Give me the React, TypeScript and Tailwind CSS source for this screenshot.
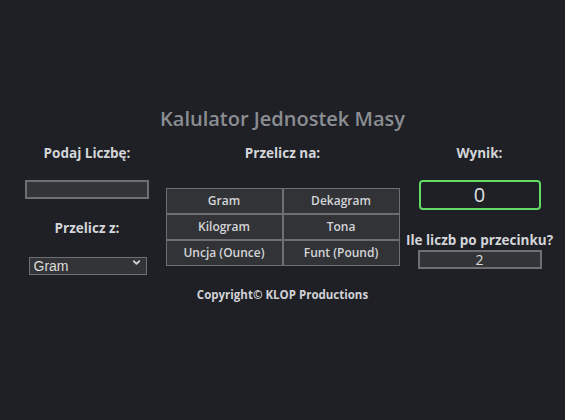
import React, { useState } from 'react';
import { ChevronDown } from 'lucide-react';

const units = ['Gram', 'Dekagram', 'Kilogram', 'Tona', 'Uncja (Ounce)', 'Funt (Pound)'];

export default function App() {
  const [value, setValue] = useState('');
  const [from, setFrom] = useState('Gram');
  const [decimals, setDecimals] = useState('2');

  return (
    <div className="min-h-[420px] w-full bg-[#1f2025] font-['Open_Sans',sans-serif] text-[#d3d5d8]">
      <div className="flex flex-col items-center pt-[106px]">
        <h1 className="text-[20px] font-semibold leading-[26px] text-[#8b8e93]">Kalulator Jednostek Masy</h1>

        <div className="mt-[12px] flex w-full">
          <div className="flex w-[174px] flex-col items-center">
            <p className="text-[13.5px] font-bold leading-[18px]">Podaj Liczbę:</p>
            <input
              value={value}
              onChange={(e) => setValue(e.target.value)}
              className="mt-[18px] h-[19px] w-[124px] border-2 border-[#6e6f72] bg-[#333438] px-1 text-[13px] text-[#ddd] outline-none"
            />
            <p className="mt-[20px] text-[13.5px] font-bold leading-[18px]">Przelicz z:</p>
            <div className="relative mt-[16px] ml-[1px]">
              <select
                value={from}
                onChange={(e) => setFrom(e.target.value)}
                className="h-[18px] w-[118px] appearance-none border border-[#6e6f72] bg-[#333438] pl-[4px] font-['Liberation_Sans',sans-serif] text-[14px] leading-[16px] text-[#dcdcdc] outline-none"
              >
                {units.map((u) => (
                  <option key={u}>{u}</option>
                ))}
              </select>
              <ChevronDown className="pointer-events-none absolute right-[5px] top-[4px] h-[11px] w-[11px] text-[#d5d5d5]" strokeWidth={4} />
            </div>
          </div>

          <div className="flex w-[217px] flex-col items-center">
            <p className="text-[13.5px] font-bold leading-[18px]">Przelicz na:</p>
            <div className="mt-[26px] grid w-[234px] grid-cols-2 gap-[2px] bg-[#6e6f72] p-[1px]">
              {units.map((u) => (
                <button
                  key={u}
                  className="h-[24px] bg-[#323337] text-[12px] font-semibold leading-[24px] text-[#d3d5d8]"
                >
                  {u}
                </button>
              ))}
            </div>
          </div>

          <div className="flex flex-1 flex-col items-center pl-[3px]">
            <p className="text-[13.5px] font-bold leading-[18px]">Wynik:</p>
            <div className="mt-[18px] flex h-[30px] w-[122px] items-center justify-center rounded-[4px] border-2 border-[#62dc62] text-[20px] leading-none text-[#dfe0e2]">
              0
            </div>
            <p className="mt-[21px] text-[13.5px] font-bold leading-[18px]">Ile liczb po przecinku?</p>
            <input
              value={decimals}
              onChange={(e) => setDecimals(e.target.value)}
              className="mt-[1px] h-[19px] w-[124px] border-2 border-[#6e6f72] bg-[#333438] text-center text-[14px] leading-[15px] text-[#dcdcdc] outline-none"
            />
          </div>
        </div>

        <p className="mt-[10px] text-[11.5px] font-bold leading-[16px] text-[#d0d2d5]">Copyright© KLOP Productions</p>
      </div>
    </div>
  );
}
